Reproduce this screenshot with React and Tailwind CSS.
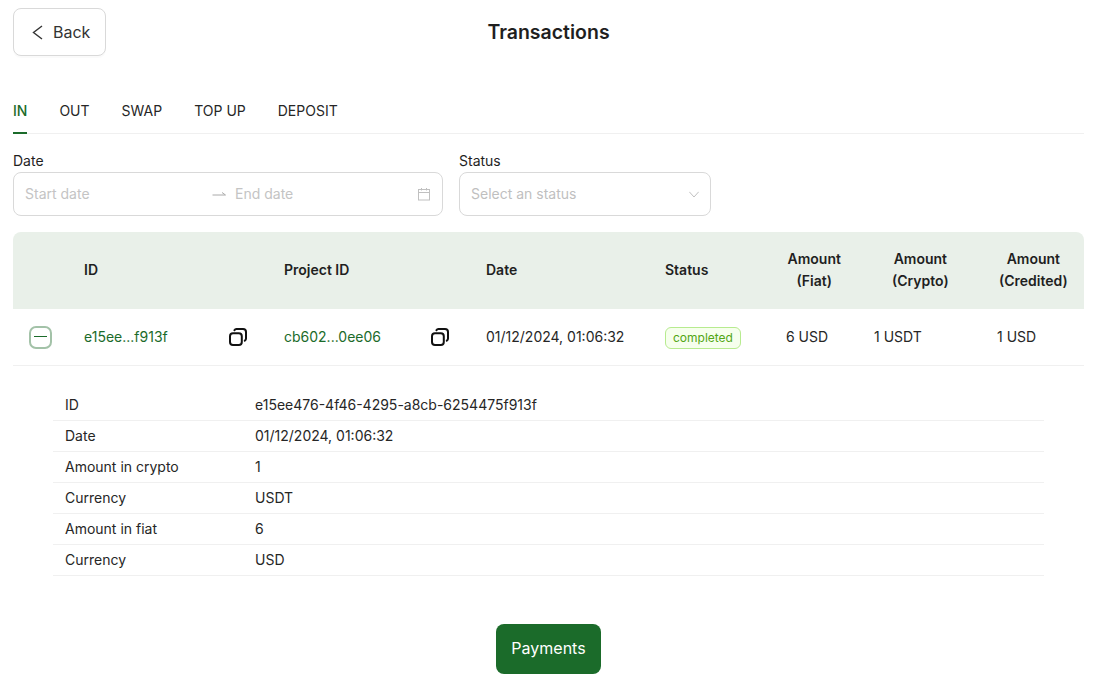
const tabs = ["IN", "OUT", "SWAP", "TOP UP", "DEPOSIT"];

const details = [
  ["ID", "e15ee476-4f46-4295-a8cb-6254475f913f"],
  ["Date", "01/12/2024, 01:06:32"],
  ["Amount in crypto", "1"],
  ["Currency", "USDT"],
  ["Amount in fiat", "6"],
  ["Currency", "USD"],
];

const gridCols = "grid grid-cols-[58px_200px_202px_179px_121px_88px_123px_100px]";

const CopyIcon = () => (
  <svg width="20" height="20" viewBox="0 0 20 20" fill="none" stroke="#111" strokeWidth="2">
    <rect x="2" y="6.2" width="11.8" height="11.8" rx="3" />
    <path d="M6.4 3.2c.4-.7 1.1-1.2 2-1.2h6.6c1.7 0 3 1.3 3 3v6.6c0 .9-.5 1.7-1.2 2.1" strokeLinecap="round" />
  </svg>
);

const AmountHead = ({ kind, pad }) => (
  <div className={`flex items-center ${pad}`}>
    <div className="text-center">
      Amount
      <br />
      {kind}
    </div>
  </div>
);

export default function App() {
  return (
    <div className="min-h-[693px] bg-white pl-[13px] pr-[14px] pt-2 text-[14px] leading-[22px] text-[#1f1f1f] font-['Inter',sans-serif]">
      <header className="relative flex h-12 items-center justify-center">
        <button className="absolute left-0 top-0 flex h-12 w-[93px] items-center rounded-lg border border-[#d9d9d9] bg-white pl-[18px] text-[16px] text-[#333] shadow-[0_2px_0_rgba(0,0,0,0.02)]">
          <svg width="11" height="15" viewBox="0 0 11 15" fill="none" stroke="#333" strokeWidth="1.4" className="mr-[10px]">
            <path d="M10 1 1.5 7.5 10 14" />
          </svg>
          Back
        </button>
        <h1 className="text-[19.5px] font-semibold leading-[28px] text-[#1f1f1f]">Transactions</h1>
      </header>

      <nav className="mt-[33px] flex h-[45px] gap-8 border-b border-[#f0f0f0]">
        {tabs.map((tab, i) => (
          <div
            key={tab}
            className={`flex h-[45px] items-center ${i === 0 ? "border-b-2 border-[#1b6b2a] font-medium text-[#1b6b2a]" : "pb-[2px] text-[#262626]"}`}
          >
            {tab}
          </div>
        ))}
      </nav>

      <div className="mt-4 flex gap-4">
        <div className="w-[430px]">
          <div className="h-[22px]">Date</div>
          <div className="flex h-[44px] items-center rounded-lg border border-[#d9d9d9] pl-[11px] pr-[11px] text-[#c4c4c4]">
            <span className="w-[187px]">Start date</span>
            <svg width="14" height="8" viewBox="0 0 14 8" fill="none" stroke="#aaa" strokeWidth="1" className="mr-[9px]">
              <path d="M0.5 5h13L10 2.5" />
            </svg>
            <span>End date</span>
            <svg width="14" height="14" viewBox="0 0 14 14" fill="none" stroke="#c0c0c0" strokeWidth="1" className="ml-auto">
              <rect x="1.5" y="2.5" width="11" height="10.5" />
              <path d="M1.500 5.500h11M4.500 1v2.500M9.500 1v2.500" />
            </svg>
          </div>
        </div>
        <div className="w-[252px]">
          <div className="h-[22px]">Status</div>
          <div className="flex h-[44px] items-center justify-between rounded-lg border border-[#d9d9d9] pl-[11px] pr-[11px] text-[#bfbfbf]">
            <span>Select an status</span>
            <svg width="10" height="7" viewBox="0 0 10 7" fill="none" stroke="#c0c0c0" strokeWidth="1">
              <path d="M.3 .8 5 6 9.700 .8" />
            </svg>
          </div>
        </div>
      </div>

      <div className="mt-[16px]">
        <div className={`${gridCols} h-[77px] rounded-t-lg bg-[#e9f0e9] pb-[2px] font-semibold text-[#1f1f1f]`}>
          <div />
          <div className="flex items-center pl-[13px]">ID</div>
          <div className="flex items-center pl-[13px]">Project ID</div>
          <div className="flex items-center pl-[13px]">Date</div>
          <div className="flex items-center pl-[13px]">Status</div>
          <AmountHead kind="(Fiat)" pad="pl-[14.5px]" />
          <AmountHead kind="(Crypto)" pad="pl-[31px]" />
          <AmountHead kind="(Credited)" pad="pl-[15px]" />
        </div>

        <div className={`${gridCols} h-[57px] items-center border-b border-[#f0f0f0] text-[#262626]`}>
          <div className="pl-4">
            <div className="relative h-[23px] w-[23px] rounded-[7px] border-2 border-[#a3c2a8]">
              <span className="absolute left-[3px] right-[3px] top-[8.5px] h-px bg-[#1b6b2a]" />
            </div>
          </div>
          <div className="flex items-center justify-between pl-[13px] pr-[23px] text-[#1b6b2a]">
            e15ee...f913f
            <CopyIcon />
          </div>
          <div className="flex items-center justify-between pl-[13px] pr-[23px] text-[#1b6b2a]">
            cb602...0ee06
            <CopyIcon />
          </div>
          <div className="pl-[13px]">01/12/2024, 01:06:32</div>
          <div className="pl-[13px]">
            <span className="inline-block h-[22px] rounded-[6px] border border-[#b7eb8f] bg-[#f6ffed] px-[7px] text-[12px] leading-[20px] text-[#52a614]">
              completed
            </span>
          </div>
          <div className="pl-[13px]">6 USD</div>
          <div className="pl-[13px]">1 USDT</div>
          <div className="pl-[13px]">1 USD</div>
        </div>

        <div className="mx-10 mt-6">
          {details.map(([label, value], i) => (
            <div key={i} className="grid h-[31px] grid-cols-[190px_1fr] items-center border-b border-[#f0f0f0] pl-3 text-[#262626]">
              <div>{label}</div>
              <div>{value}</div>
            </div>
          ))}
        </div>
      </div>

      <div className="mt-[48px] flex justify-center">
        <button className="h-[50px] w-[105px] rounded-lg bg-[#1b6b2a] pb-[2px] text-[16px] text-white">Payments</button>
      </div>
    </div>
  );
}
